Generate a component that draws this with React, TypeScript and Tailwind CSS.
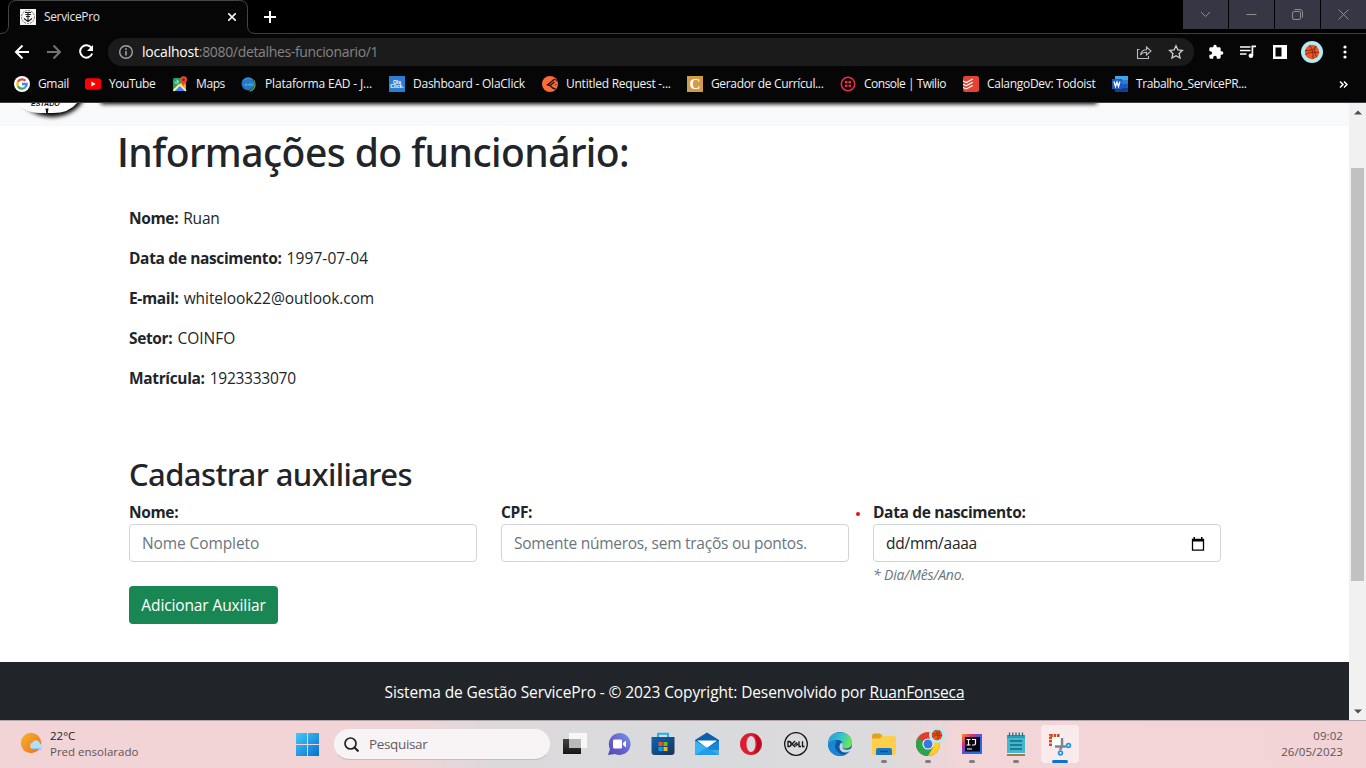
import type { ReactNode } from "react";

const Svg = ({ s = 16, v, children, className = "" }: { s?: number; v?: string; children: ReactNode; className?: string }) => (
  <svg width={s} height={s} viewBox={v ?? `0 0 ${s} ${s}`} className={`block shrink-0 ${className}`} fill="none">
    {children}
  </svg>
);

const Basketball = ({ s }: { s: number }) => (
  <Svg s={s} v="0 0 22 22">
    <circle cx="11" cy="11" r="11" fill="#b2ebf2" />
    <circle cx="11" cy="11" r="7.2" fill="#f4511e" />
    <path d="M4 9.500c5 .5 9.500-1 11.500-4.200M4.200 13.500c5-2.500 9.500-3 14-1.500M8.500 4.300c3 3.500 4 8.500 3.500 13.800M14.500 4.800c-1.500 4-1 8 1.500 11.500" stroke="#5d2b1a" strokeWidth=".8" />
  </Svg>
);

const GoogleIcon = () => (
  <Svg>
    <circle cx="8" cy="8" r="8" fill="#fff" />
    <g strokeWidth="2.300">
      <path d="M11.400 4.700A4.700 4.700 0 0 0 3.900 5.800" stroke="#ea4335" />
      <path d="M3.900 5.800a4.700 4.700 0 0 0 0 4.400" stroke="#fbbc05" />
      <path d="M3.900 10.200a4.700 4.700 0 0 0 7.200 1.300" stroke="#34a853" />
      <path d="M11.100 11.500A4.700 4.700 0 0 0 12.700 8H8" stroke="#4285f4" />
    </g>
  </Svg>
);
const YoutubeIcon = () => (
  <Svg>
    <rect x="0" y="2.300" width="16" height="11.400" rx="2.600" fill="#f00" />
    <path d="M6.400 5.500 10.600 8l-4.200 2.500z" fill="#fff" />
  </Svg>
);
const MapsIcon = () => (
  <Svg>
    <rect x="1" y="2" width="13" height="13" rx="1.500" fill="#1fa463" />
    <path d="M1 13.500 13 3l1 12H2.500z" fill="#fbbc04" />
    <path d="M3 15 8.500 9.500 14 15z" fill="#4285f4" />
    <path d="m1.500 15 6-6.500M8 9l6 6" stroke="#f1f3f4" strokeWidth="1.500" />
    <path d="M2.800 5.700a1.700 1.700 0 1 0 1.700-1.700M4.500 5.700h1.600" stroke="#e8f5e9" strokeWidth=".8" />
    <path d="M11.500 10.500C11 7.800 8.200 6.500 8.200 3.700a3.400 3.400 0 0 1 6.800 0c0 2.800-3 4-3.500 6.800z" fill="#ea4335" />
    <circle cx="11.600" cy="3.700" r="1.200" fill="#7b1b13" />
  </Svg>
);
const EadIcon = () => (
  <Svg>
    <path d="M6 14.800C12 15 15 10 12.500 3c3.500 4 2.500 10.500-3 12.500z" fill="#72b84a" />
    <circle cx="7" cy="7.700" r="6.500" fill="#2179c7" />
    <path d="M3 4.500C5 2 9 1.500 11.500 3.500" stroke="#3f9de4" />
    <path d="M4 9.500c0-2 2-2 2-.8S4 9 4 9m3 .8c0-2 2-2 2 0m0-2.800v2.800m1.300-2.300 1 2 1-2" stroke="#8cc3ee" strokeWidth=".6" />
  </Svg>
);
const OlaIcon = () => (
  <span className="flex h-4 w-4 shrink-0 flex-col items-center justify-center bg-[#2d7dd2] font-['Liberation_Sans'] text-[5px] leading-[4.500px] font-bold text-white">
    <span>Ola</span>
    <span>Click.</span>
  </span>
);
const PostmanIcon = () => (
  <Svg>
    <circle cx="8" cy="8" r="8" fill="#ff6c37" />
    <path d="M12.300 3.300 7 7.800l-1.500 1 2.500.8M8 9.600l3 2.600 2.500 1M8 9.400 12.500 6" stroke="#120c0a" strokeWidth="1.300" />
    <path d="M12 3.500q2.500-.5 2.700 2M13 9.500l1.500-1.500" stroke="#120c0a" strokeWidth=".9" />
  </Svg>
);
const CurriculoIcon = () => (
  <span className="flex h-4 w-4 shrink-0 items-center justify-center bg-[#d39b47] font-['Liberation_Serif'] text-[15px] leading-none font-bold text-white">C</span>
);
const TwilioIcon = () => (
  <Svg>
    <circle cx="8" cy="8" r="6.700" stroke="#f22f46" strokeWidth="1.500" />
    <g fill="#f22f46"><circle cx="6.200" cy="6.200" r="1.400" /><circle cx="9.800" cy="6.200" r="1.400" /><circle cx="6.200" cy="9.800" r="1.400" /><circle cx="9.800" cy="9.800" r="1.400" /></g>
  </Svg>
);
const TodoistIcon = () => (
  <Svg>
    <rect width="16" height="16" rx="2" fill="#e44332" />
    <path d="m0 5 3.300 1.600L9.800 3M0 8.200l3.300 1.600 6.500-3.600M0 11.400 3.300 13l6.500-3.600" stroke="#fff" strokeWidth="1.100" />
  </Svg>
);
const WordIcon = () => (
  <Svg>
    <rect x="3" y="0" width="13" height="4.200" fill="#41a5ee" />
    <rect x="3" y="4" width="13" height="4.200" fill="#2b7cd3" />
    <rect x="3" y="8" width="13" height="4.200" fill="#185abd" />
    <rect x="3" y="12" width="13" height="4" fill="#103f91" />
    <rect x="0" y="3" width="10" height="10" fill="#1a5cbf" />
    <path d="M2 5.500 3.500 10.500 5 6l1.500 4.500L8 5.500" stroke="#fff" strokeWidth="1.300" />
  </Svg>
);

const bookmarks: { icon: ReactNode; label: string; w: string; t: string }[] = [
  { icon: <GoogleIcon />, label: "Gmail", w: "w-[71px]", t: "tracking-[-0.35px]" },
  { icon: <YoutubeIcon />, label: "YouTube", w: "w-[87px]", t: "tracking-[-0.45px]" },
  { icon: <MapsIcon />, label: "Maps", w: "w-[69px]", t: "tracking-[-0.4px]" },
  { icon: <EadIcon />, label: "Plataforma EAD - J...", w: "w-[148px]", t: "tracking-[-0.18px]" },
  { icon: <OlaIcon />, label: "Dashboard - OlaClick", w: "w-[153px]", t: "tracking-[-0.25px]" },
  { icon: <PostmanIcon />, label: "Untitled Request -...", w: "w-[145px]", t: "tracking-[-0.25px]" },
  { icon: <CurriculoIcon />, label: "Gerador de Currícul...", w: "w-[153px]", t: "tracking-[-0.35px]" },
  { icon: <TwilioIcon />, label: "Console | Twilio", w: "w-[123px]", t: "tracking-[-0.5px]" },
  { icon: <TodoistIcon />, label: "CalangoDev: Todoist", w: "w-[149px]", t: "tracking-[-0.3px]" },
  { icon: <WordIcon />, label: "Trabalho_ServicePR...", w: "w-[136px]", t: "tracking-[-0.4px]" },
];

const Favicon = () => (
  <Svg>
    <rect width="16" height="16" fill="#f4f4f4" />
    <circle cx="8" cy="8" r="6.500" stroke="#777" strokeDasharray="2 1" />
    <path d="M5 3.500h6M5.500 5.500H11M6 7.500h4M8 3v10M4 9.500l4 3 4-3" stroke="#222" strokeWidth="1.100" />
  </Svg>
);

function TabStrip() {
  return (
    <div className="flex h-[34px] justify-between bg-black">
      <div className="flex">
        <svg width="256" height="34" className="absolute top-0 left-0" fill="none">
          <path d="M0 33.500C6 33.500 8.500 31 8.500 25V8.500Q8.500.5 16.500.5H239.500Q247.500.5 247.500 8.500V25C247.500 31 250 33.500 256 33.500V34H0z" fill="#060606" />
          <path d="M0 33.500C6 33.500 8.500 31 8.500 25V8.500Q8.500.5 16.500.5H239.500Q247.500.5 247.500 8.500V25C247.500 31 250 33.500 256 33.500" stroke="#444546" />
        </svg>
        <div className="relative flex w-[256px] items-center pl-5">
          <Favicon />
          <span className="ml-2 flex-1 text-[12px] tracking-[-0.35px] text-[#e4e5e6]">ServicePro</span>
          <Svg s={8} className="mr-5"><path d="m0 0 8 8m0-8L0 8" stroke="#f1f1f1" strokeWidth="1.600" /></Svg>
        </div>
        <div className="flex items-center border-b border-[#3c3d3e] pl-2">
          <Svg s={12}><path d="M6 0v12M0 6h12" stroke="#fff" strokeWidth="2" /></Svg>
        </div>
      </div>
      <div className="flex flex-1 justify-end gap-px border-b border-[#3c3d3e]">
        {[
          <path key="a" d="m1 3 4.500 4.500L10 3" />,
          <path key="b" d="M.5 5.500h10" />,
          <path key="c" d="M.5 4q0-1.500 1.500-1.500h5Q8.500 2.500 8.500 4v5q0 1.500-1.500 1.500H2Q.5 10.500.5 9zM2.500.5h5.500q2.500 0 2.500 2.500v5.500" />,
          <path key="d" d="m.5.5 10 10m0-10-10 10" />,
        ].map((p, i) => (
          <div key={i} className="flex h-[29px] w-[45px] items-center justify-center bg-[#363645] pr-px pb-px">
            <Svg s={11}><g stroke="#96969d" strokeWidth=".9">{p}</g></Svg>
          </div>
        ))}
      </div>
    </div>
  );
}

function Toolbar() {
  return (
    <div className="flex h-9 items-center bg-[#060606] pl-[14px]">
      <Svg s={16}><path d="M15 8H2m6.500-6.500L2 8l6.500 6.500" stroke="#fff" strokeWidth="2" /></Svg>
      <Svg s={16} className="ml-4"><path d="M1 8h13M7.500 1.500 14 8l-6.500 6.500" stroke="#737373" strokeWidth="2" /></Svg>
      <Svg s={16} className="ml-4"><path d="M13.500 4A6.200 6.200 0 1 0 14.200 9.500" stroke="#fff" strokeWidth="2" /><path d="M15 1v6H9z" fill="#fff" /></Svg>
      <div className="ml-[14px] flex h-7 w-[1086px] items-center rounded-full bg-[#1b1b1b] pl-[11px]">
        <Svg s={14}><circle cx="7" cy="7" r="6.300" stroke="#a0a3a6" strokeWidth="1.400" /><path d="M7 6v4.500M7 3.300v1.600" stroke="#a0a3a6" strokeWidth="1.600" /></Svg>
        <span className="ml-[9px] flex-1 text-[14px] leading-5 tracking-[-0.34px] text-[#858585]"><span className="tracking-[-0.2px] text-white">localhost</span>:8080/detalhes-funcionario/1</span>
        <Svg s={16}><path d="M3.500 5.500H1.500v9h11V12M4.500 11c.5-3.500 2.500-5.200 6-5.200V3L15 7l-4.500 4V8.300c-3 0-4.800.8-6 2.700z" stroke="#b9bbbd" strokeWidth="1.100" /></Svg>
        <Svg s={16} className="mr-[10px] ml-4"><path d="m8 1.800 1.900 4.100 4.500.5-3.300 3.100.9 4.500-4-2.300L4 14l.9-4.500L1.600 6.400l4.500-.5z" stroke="#d0d1d2" strokeWidth="1.300" /></Svg>
      </div>
      <Svg s={16} v="0 0 24 24" className="ml-[14px]"><path fill="#fff" d="M20.500 11H19V7c0-1.100-.9-2-2-2h-4V3.500a2.500 2.500 0 0 0-5 0V5H4c-1.100 0-2 .9-2 2v3.800h1.500a2.700 2.700 0 0 1 0 5.400H2V20c0 1.100.9 2 2 2h3.800v-1.500a2.700 2.700 0 0 1 5.400 0V22H17c1.100 0 2-.9 2-2v-4h1.500a2.500 2.500 0 0 0 0-5z" /></Svg>
      <Svg s={16} className="ml-4"><path d="M0 3h10.500M0 6.500h10.500M0 10h6.500M11.500 2.300H16M12.400 2.500v9" stroke="#fff" strokeWidth="1.700" /><circle cx="10.900" cy="11.700" r="2.300" fill="#fff" /></Svg>
      <Svg s={14} className="ml-[17px]"><path d="M0 0h14v14H0zM2.500 2.500v9h6v-9z" fillRule="evenodd" fill="#fff" /></Svg>
      <div className="ml-[14px]"><Basketball s={22} /></div>
      <Svg s={4} v="0 0 4 14" className="ml-[20px] h-[14px]"><g fill="#fff"><circle cx="2" cy="2" r="1.600" /><circle cx="2" cy="7" r="1.600" /><circle cx="2" cy="12" r="1.600" /></g></Svg>
    </div>
  );
}

function BookmarksBar() {
  return (
    <div className="flex h-[33px] items-center border-b border-[#3c3d3e] bg-[#060606] pb-[4px] pl-[14px]">
      {bookmarks.map((b) => (
        <div key={b.label} className={`flex shrink-0 items-center gap-2 ${b.w}`}>
          {b.icon}
          <span className={`text-[12px] whitespace-nowrap text-[#f2f2f2] ${b.t}`}>{b.label}</span>
        </div>
      ))}
      <Svg s={9} className="ml-[91px]"><path d="m1 1.500 3 3-3 3M5 1.500l3 3-3 3" stroke="#fff" strokeWidth="1.500" /></Svg>
    </div>
  );
}

const details: { k: string; v: string; vt: string }[] = [
  { k: "Nome:", v: "Ruan", vt: "tracking-[-0.2px]" },
  { k: "Data de nascimento:", v: "1997-07-04", vt: "tracking-[0.08px]" },
  { k: "E-mail:", v: "whitelook22@outlook.com", vt: "tracking-[-0.08px]" },
  { k: "Setor:", v: "COINFO", vt: "tracking-[0px]" },
  { k: "Matrícula:", v: "1923333070", vt: "tracking-[-0.25px]" },
];

function Field({ label, children }: { label: string; children: ReactNode }) {
  return (
    <div className="w-[348px]">
      <div className="h-6 text-[15.500px] leading-6 font-bold tracking-[-0.35px]">{label}</div>
      <div className="flex h-[38px] items-center justify-between rounded border border-[#ced4da] px-3 pt-px text-[15.500px]">{children}</div>
    </div>
  );
}

function Page() {
  return (
    <main className="flex w-[1349px] flex-col overflow-hidden bg-white text-[#212529]">
      <div className="h-[23px] shrink-0 bg-[#f8f9fa]">
        <div className="relative h-[23px] overflow-hidden">
          <div className="absolute -top-[12px] left-[102px] h-[12px] w-[994px] shadow-[0_0_4px_1px_#000]" />
          <svg width="110" height="23" className="absolute top-0 left-0">
            <defs><filter id="seal" x="-50%" y="-50%" width="200%" height="200%"><feGaussianBlur stdDeviation="2" /></filter></defs>
            <ellipse cx="52" cy="-14" rx="34" ry="28" fill="#000" filter="url(#seal)" />
            <path d="M16 0q10 10 24 10h13q16 0 24-10z" fill="#fff" />
            <path d="M45.500 5.500h3l-.7 4.500h-1.600z" fill="#111" />
            <text x="31" y="2.500" fontSize="7" fontWeight="700" fontStyle="italic" fontFamily="Liberation Sans" fill="#111">ESTADO</text>
          </svg>
        </div>
      </div>
      <div className="flex-1 pl-[117px]">
        <h1 className="mt-[2px] h-12 font-['Noto_Sans'] text-[39px] leading-[48px] font-medium tracking-[-0.55px]">
          <span className="font-['Open_Sans'] font-semibold">I</span>nformações do funcionário:
        </h1>
        <dl className="mt-[30px] flex flex-col gap-4 pl-3 text-[15.500px] leading-6">
          {details.map((d) => (
            <div key={d.k} className="flex gap-[5px]">
              <dt className="font-bold tracking-[-0.35px]">{d.k}</dt>
              <dd className={d.vt}>{d.v}</dd>
            </div>
          ))}
        </dl>
        <section className="mt-[65px] pl-3">
          <h2 className="h-[45px] font-['Noto_Sans'] text-[31px] leading-[38px] font-medium tracking-[-0.6px]">Cadastrar auxiliares</h2>
          <div className="flex">
            <Field label="Nome:"><span className="tracking-[-0.1px] text-[#6c757d]">Nome Completo</span></Field>
            <div className="w-6" />
            <Field label="CPF:"><span className="tracking-[-0.25px] text-[#6c757d]">Somente números, sem traçõs ou pontos.</span></Field>
            <div className="w-6 pt-[12px] pl-[7px]"><div className="h-1 w-1 rounded-full bg-[#e8101a]" /></div>
            <div>
              <Field label="Data de nascimento:">
                <span className="tracking-[-0.25px]">dd/mm/aaaa</span>
                <Svg s={14} className="mr-[3px]"><path d="M1.500 2.500h11v10.700h-11z" stroke="#000" strokeWidth="1.300" /><path d="M1 2h12v2.500H1zM2.500 0h1.500v3H2.500zM10 0h1.500v3H10z" fill="#000" /></Svg>
              </Field>
              <p className="mt-[3px] mb-px text-[14px] leading-[20px] tracking-[-0.15px] text-[#6c757d] italic">* Dia/Mês/Ano.</p>
            </div>
          </div>
          <button className="flex h-[38px] w-[149px] items-center justify-center rounded bg-[#198754] pt-px text-[15.500px] tracking-[-0.12px] whitespace-nowrap text-white">Adicionar Auxiliar</button>
        </section>
      </div>
      <footer className="flex h-[58px] shrink-0 items-center justify-center bg-[#212529] pt-[3px] text-[15.500px] tracking-[-0.11px] whitespace-pre text-white">
        Sistema de Gestão ServicePro - © 2023 Copyright: Desenvolvido por <a className="underline">RuanFonseca</a>
      </footer>
    </main>
  );
}

function Scrollbar() {
  return (
    <div className="flex w-[17px] flex-col items-center bg-[#f1f1f1] pt-[7px]">
      <Svg s={8} v="0 0 8 5" className="h-[5px]"><path d="M0 4.500 4 .500 8 4.500z" fill="#505050" /></Svg>
      <div className="mt-[53px] h-[413px] w-[13px] bg-[#c1c1c1]" />
      <Svg s={8} v="0 0 8 5" className="mt-[128px] h-[5px]"><path d="M0 .5 4 4.500 8 .5z" fill="#505050" /></Svg>
    </div>
  );
}

const taskIcons: { icon: ReactNode; mark?: boolean; active?: boolean }[] = [
  { icon: <Svg s={24}><defs><linearGradient id="tv" x1="0" y1="0" x2="0" y2="1"><stop stopColor="#444" /><stop offset="1" stopColor="#151515" /></linearGradient></defs><rect x="0" y="7" width="18" height="15" fill="url(#tv)" /><rect x="6" y="1" width="18" height="15" fill="#f7f7f7" /><rect x="6" y="7" width="12" height="9" fill="#b9b9b9" /></Svg> },
  { icon: <Svg s={24}><defs><linearGradient id="ch" x1="1" y1="0" x2="0" y2="1"><stop stopColor="#719bec" /><stop offset=".5" stopColor="#6a62cf" /><stop offset="1" stopColor="#5146b8" /></linearGradient></defs><path d="M12.500 1A11 11 0 1 1 8 22L1 23l2-6A11 11 0 0 1 12.500 1z" fill="url(#ch)" /><rect x="6" y="7.500" width="9" height="9" rx="1.200" fill="#fff" /><path d="m16 11 3-2.500v7L16 13z" fill="#fff" /></Svg> },
  { icon: <Svg s={24}><defs><linearGradient id="st" x1="0" y1="0" x2="1" y2="1"><stop stopColor="#0c65b5" /><stop offset="1" stopColor="#1b3158" /></linearGradient></defs><path d="M7 6V1.800h10V6" stroke="#20aeee" strokeWidth="2" /><path d="M.5 5h23v15q0 3-3 3h-17q-3 0-3-3z" fill="url(#st)" /><path d="M7.500 10h4v4h-4z" fill="#f25022" /><path d="M12.500 10h4v4h-4z" fill="#7fba00" /><path d="M7.500 15h4v4h-4z" fill="#00a4ef" /><path d="M12.500 15h4v4h-4z" fill="#ffb900" /></Svg> },
  { icon: <Svg s={24}><path d="M0 8 12 .5 24 8v10H0z" fill="#0b5eb0" /><path d="M2 8.500h20L12 16z" fill="#fff" /><path d="M0 8.500 24 23H0z" fill="#36b3f4" /><path d="M24 8.500V23H0z" fill="#1896e7" opacity=".75" /></Svg> },
  { icon: <Svg s={24}><path d="M12 1a11 11 0 1 0 0 22 11 11 0 0 0 0-22zm0 3c3 0 4.500 4 4.500 8S15 20 12 20s-4.500-4-4.500-8S9 4 12 4z" fill="#e11a30" fillRule="evenodd" /><path d="M14 2c5 1 8 5 8 10s-3 9-8 10c3-2 4-6 4-10s-1-8-4-10z" fill="#b40d22" /></Svg> },
  { icon: <Svg s={24}><circle cx="12" cy="12" r="11.300" stroke="#111" strokeWidth="1.300" /><path d="M4 9.500v5h.8q2.400 0 2.400-2.500T4.800 9.500zM11 9l-3 3 3 3M10.300 12.800l2.700-2.300M11.500 14l2.700-2.300M15 9.300v5.200h2M18.500 9.300v5.200h2" stroke="#111" strokeWidth="1.300" /></Svg> },
  { icon: <Svg s={24}><defs><linearGradient id="eg" x1="0" y1="0" x2="1" y2=".3"><stop stopColor="#2698df" /><stop offset=".6" stopColor="#35c6ca" /><stop offset="1" stopColor="#6be457" /></linearGradient></defs><circle cx="12" cy="12" r="12" fill="#0c59a4" /><path d="M.2 10.500C1.500-2.500 22-3.500 24 10c.4 4.500-3 6.500-7 6.500s-4-2-2.500-3.500c1-3-1.500-5-4.500-5C5.500 8 .5 10 .2 14z" fill="url(#eg)" /><path d="M9 9.500c-5 5 0 13.500 8.500 13C10 26 0 22 .2 12.500 1.500 8.500 6 7.500 9 9.500z" fill="#1c86d6" /><path d="M14.500 13.500c-.8 2 .3 4 3.500 4.300 2 .2 4-.8 5.500-1.800.5 0 .3 1 0 1.500-3 4.500-11 4-12-1.500-.3-2 .5-4.500 2-5.500 1 .5 1.500 1.500 1 3z" fill="#dadada" opacity=".95" /></Svg> },
  { icon: <Svg s={24}><path d="M0 4q0-2.500 2-2.500h6L10.500 4l-3 3H0z" fill="#dfa21b" /><path d="M0 6.500h7.500L10.500 4H22q2 0 2 2v15q0 2-2 2H2q-2 0-2-2z" fill="#fdcf4b" /><path d="M4 23v-5q0-2 2-2h12q2 0 2 2v5z" fill="#1878c4" /><path d="M8 19.500h8" stroke="#0b4f93" strokeWidth="1.500" /></Svg>, mark: true },
  { icon: <span className="relative block"><Svg s={24}><circle cx="12" cy="12" r="12" fill="#e33b2e" /><path d="M12 12 1.600 6A12 12 0 0 0 12 24l5-9z" fill="#2ba24c" /><path d="M12 7h10.900A12 12 0 0 1 12 24l5.200-9z" fill="#fdd020" /><circle cx="12" cy="12" r="5.600" fill="#fff" /><circle cx="12" cy="12" r="4.500" fill="#3478e6" /></Svg><span className="absolute -top-[5px] left-[13px]"><Basketball s={16} /></span></span>, mark: true },
  { icon: <Svg s={22}><defs><linearGradient id="ij" x1="0" y1="0" x2="1" y2="1"><stop stopColor="#f88b20" /><stop offset=".3" stopColor="#d52c83" /><stop offset=".5" stopColor="#4a55e0" /><stop offset="1" stopColor="#087cfa" /></linearGradient></defs><path d="M1 1h20v20H1z" fill="url(#ij)" /><rect x="4" y="4" width="15" height="14.500" fill="#080410" /><path d="M5.500 6.500h4M7.500 6.500V12M5.500 12h4M11 6.500h3.500v4q0 1.500-1.500 1.500h-2M6 16h5" stroke="#fff" strokeWidth="1.200" /></Svg>, mark: true },
  { icon: <Svg s={24}><path d="M3 3h18v18H3z" fill="#42b8cf" /><path d="M3 3h18v3H3z" fill="#2b9db8" /><path d="M5.500.5V4M8.800.5V4M12 .5V4M15.200.5V4M18.500.5V4" stroke="#126a82" strokeWidth="1.200" /><path d="M6 9h12M6 13h12M6 17h12" stroke="#126a82" strokeWidth="1.300" /><path d="M3 21h18v3H3z" fill="#f7eee5" /><path d="M3 23h18" stroke="#89501c" strokeWidth="1.500" /></Svg>, mark: true },
  { icon: <Svg s={24}><path d="M1 2h13v12H1z" fill="#fff" /><path d="M2.500 14V3.500h10" stroke="#d9481c" strokeWidth="3" strokeDasharray="2.600 .8" /><path d="M14 6v8.500l-2 3.500M7 14.500h11" stroke="#7d8590" strokeWidth="2.500" /><circle cx="20.500" cy="13.500" r="1.900" stroke="#2196dc" strokeWidth="1.700" /><circle cx="12.500" cy="21" r="1.900" stroke="#2196dc" strokeWidth="1.700" /></Svg>, active: true },
];

function Taskbar() {
  return (
    <div className="flex h-12 border-t border-[#b5a7a9] bg-[linear-gradient(90deg,#f2d4d6_0px,#f2d4d6_400px,#dcd9dc_490px,#d9dadd_700px,#dcdadc_890px,#f2d5d7_960px,#f2d4d6_1366px)]">
      <div className="flex w-[296px] pt-[7px] pl-[20px]">
        <Svg s={24} className="mt-[4px]"><defs><linearGradient id="sun" x1="0" y1="0" x2="1" y2="1"><stop stopColor="#f5b52d" /><stop offset="1" stopColor="#ed6f1d" /></linearGradient></defs><circle cx="11" cy="11" r="10.200" fill="url(#sun)" /><path d="M12 17a3.500 3.500 0 0 1 .5-6.500 4 4 0 0 1 7.500 1.500q3 .5 2.800 3-.3 2-2.500 2z" fill="#b3defc" /><path d="M12 17h9" stroke="#6fb4e8" /></Svg>
        <div className="ml-[6px] text-[11.500px] leading-4">
          <div className="text-[#222]">22°C</div>
          <div className="text-[#5c5355]">Pred ensolarado</div>
        </div>
      </div>
      <div className="flex w-[37px] items-center">
        <Svg s={23}><defs><linearGradient id="wn" x1="0" y1="0" x2="1" y2="1"><stop stopColor="#45c8fa" /><stop offset="1" stopColor="#0571cf" /></linearGradient></defs><path d="M0 0h11v11H0zM12 0h11v11H12zM0 12h11v11H0zM12 12h11v11H12z" fill="url(#wn)" /></Svg>
      </div>
      <div className="mt-[7px] flex h-8 w-[218px] items-center rounded-full border border-b-[#c5bcbe] border-[#e4d9da] bg-[#f8f4f5] pl-[10px]">
        <Svg s={15}><circle cx="6.500" cy="6.500" r="5.500" stroke="#222" strokeWidth="1.700" /><path d="m10.500 10.500 4 4" stroke="#222" strokeWidth="2" /></Svg>
        <span className="ml-[10px] text-[13.500px] tracking-[-0.35px] text-[#5f5b5d]">Pesquisar</span>
      </div>
      <div className="ml-[2px] flex">
        {taskIcons.map((t, i) => (
          <div key={i} className="flex w-[44.100px] justify-center pt-1">
            <div className={`flex h-[38px] w-[38px] flex-col items-center pt-[7px] ${t.active ? "rounded bg-[#f9ebec]" : ""}`}>
              <div className="flex h-6 items-center">{t.icon}</div>
              {t.mark && <div className="mt-[4px] h-[3px] w-[6px] rounded-full bg-[#847b7e]" />}
              {t.active && <div className="mt-[4px] h-[3px] w-4 rounded-full bg-[#0876d1]" />}
            </div>
          </div>
        ))}
      </div>
      <div className="flex-1 pt-[7px] pr-[23px] text-right text-[11.500px] leading-4 tracking-[0.08px] text-[#5c5355]">
        <div>09:02</div>
        <div>26/05/2023</div>
      </div>
    </div>
  );
}

export default function App() {
  return (
    <div className="relative flex h-[768px] w-[1366px] flex-col overflow-hidden bg-black font-['Open_Sans','Noto_Sans',sans-serif]">
      <TabStrip />
      <Toolbar />
      <BookmarksBar />
      <div className="flex h-[617px]">
        <Page />
        <Scrollbar />
      </div>
      <Taskbar />
    </div>
  );
}
